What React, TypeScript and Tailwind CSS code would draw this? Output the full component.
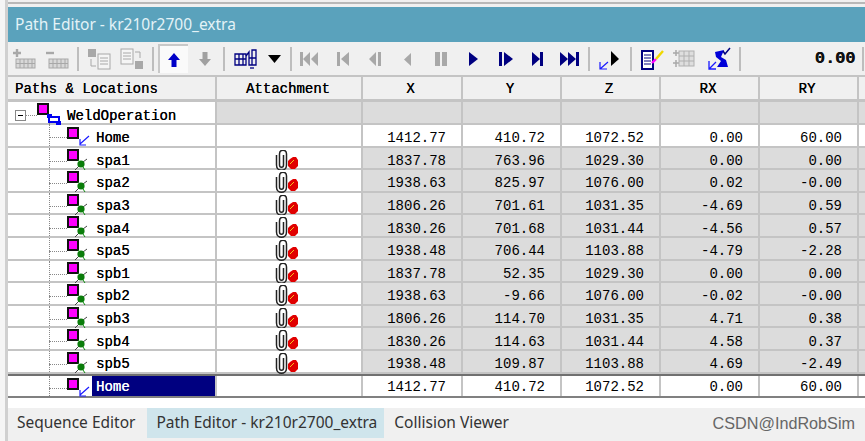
import React from "react";

const mono = "font-['Liberation_Mono',monospace]";
const grid = "grid grid-cols-[209px_146px_100px_99px_99px_99px_99px_6px]";

type Row = { name: string; x: string; y: string; z: string; rx: string; ry: string };

const rows: Row[] = [
  { name: "spa1", x: "1837.78", y: "763.96", z: "1029.30", rx: "0.00", ry: "0.00" },
  { name: "spa2", x: "1938.63", y: "825.97", z: "1076.00", rx: "0.02", ry: "-0.00" },
  { name: "spa3", x: "1806.26", y: "701.61", z: "1031.35", rx: "-4.69", ry: "0.59" },
  { name: "spa4", x: "1830.26", y: "701.68", z: "1031.44", rx: "-4.56", ry: "0.57" },
  { name: "spa5", x: "1938.48", y: "706.44", z: "1103.88", rx: "-4.79", ry: "-2.28" },
  { name: "spb1", x: "1837.78", y: "52.35", z: "1029.30", rx: "0.00", ry: "0.00" },
  { name: "spb2", x: "1938.63", y: "-9.66", z: "1076.00", rx: "-0.02", ry: "-0.00" },
  { name: "spb3", x: "1806.26", y: "114.70", z: "1031.35", rx: "4.71", ry: "0.38" },
  { name: "spb4", x: "1830.26", y: "114.63", z: "1031.44", rx: "4.58", ry: "0.37" },
  { name: "spb5", x: "1938.48", y: "109.87", z: "1103.88", rx: "4.69", ry: "-2.49" },
];

const headers = ["X", "Y", "Z", "RX", "RY"];

function Square() {
  return <div className="absolute w-[12px] h-[12px] bg-[#ff00ff] border-2 border-[#111]" />;
}

function Axis({ className }: { className: string }) {
  return (
    <svg className={className} width="12" height="12" viewBox="0 0 12 12" fill="none" stroke="#1a1aff" strokeWidth="1.2">
      <path d="M11 1 L2 9 M2 4 V10 H8" />
    </svg>
  );
}

function Target({ className }: { className: string }) {
  return (
    <svg className={className} width="14" height="14" viewBox="0 0 14 14">
      <path d="M1 13 L5 9 M9 5 L13 2" stroke="#444" strokeWidth="1" />
      <path d="M4 3 L6 5 M11 13 L9 10" stroke="#0a8a0a" strokeWidth="1" />
      <circle cx="7" cy="7" r="3.6" fill="#0a7d0a" />
    </svg>
  );
}

function Clip() {
  return (
    <svg className="absolute left-[58px] top-[2px]" width="30" height="22" viewBox="0 0 30 22">
      <path d="M1.5 5 V15 C1.5 22 11.5 22 11.5 15 V4 C11.5 -1 4.5 -1 4.5 4 V15 C4.5 18 8.5 18 8.5 15 V5" fill="none" stroke="#222" strokeWidth="1.5" />
      <path d="M15 9 L18 7 H21 L23 10 V16 L20 19 H16 L13 16 V11 Z" fill="#e00000" />
      <path d="M15 14 L19 10" stroke="#f5c020" strokeWidth="1" />
    </svg>
  );
}

function Cell({ value, gray, last }: { value: string; gray?: boolean; last?: boolean }) {
  return (
    <div className={`flex items-center justify-end pr-[15px] border-r-2 border-[#c4c4c4] text-[14px] leading-none text-black ${mono} ${gray ? "bg-[#dcdcdc]" : "bg-white"} ${last ? "pt-[2px]" : "pt-[6px] border-b-2"}`}>
      {value}
    </div>
  );
}

function Tree({ name, kind, selected, last }: { name: string; kind: "home" | "spot"; selected?: boolean; last?: boolean }) {
  return (
    <div className={`relative border-r-2 border-[#c4c4c4] bg-white ${last ? "" : "border-b-2"}`}>
      <div className="absolute left-[41px] top-0 h-full border-l border-dotted border-[#888]" />
      <div className={`absolute left-[41px] w-[18px] border-t border-dotted border-[#888] ${kind === "home" ? "top-[12px]" : "top-[13px]"}`} />
      <div className={`absolute left-[59px] ${kind === "home" ? "top-[2px]" : "top-[1px]"}`}>
        <Square />
      </div>
      {kind === "home" ? (
        <Axis className="absolute left-[70px] top-[10px]" />
      ) : (
        <Target className="absolute left-[66px] top-[9px]" />
      )}
      <div
        className={`absolute left-[84px] top-0 right-0 h-full flex items-center pl-[4px] text-[14px] leading-none [text-shadow:0.2px_0_0_currentColor] ${mono} ${selected ? "bg-[#000080] text-white pt-[2px]" : "text-black pt-[6px]"}`}
      >
        {name}
      </div>
    </div>
  );
}

function Sep({ ml }: { ml: string }) {
  return <div className={`w-[2px] h-[24px] bg-[#bdbdbd] ${ml}`} />;
}

function GridIcon({ sign }: { sign: "+" | "-" }) {
  return (
    <svg width="23" height="22" viewBox="0 0 23 22">
      <path d={sign === "+" ? "M4 1 V9 M0 5 H8" : "M0 5 H8"} stroke="#a8a8a8" strokeWidth="2.4" />
      <rect x="3" y="11" width="19" height="9" fill="#d8d8d8" stroke="#a8a8a8" />
      <path d="M3 15.5 H22 M7 11 V20 M11 11 V20 M15 11 V20 M19 11 V20" stroke="#a8a8a8" />
    </svg>
  );
}

function CopyIcon({ flip }: { flip?: boolean }) {
  return flip ? (
    <svg width="24" height="22" viewBox="0 0 24 22">
      <rect x="1" y="1" width="12" height="15" fill="#f5f5f5" stroke="#a8a8a8" />
      <path d="M3 5 H11 M3 8 H11 M3 11 H11" stroke="#a8a8a8" />
      <path d="M15 4 H20 V10" fill="none" stroke="#a8a8a8" />
      <rect x="15" y="13" width="8" height="8" fill="#a8a8a8" />
    </svg>
  ) : (
    <svg width="24" height="22" viewBox="0 0 24 22">
      <rect x="1" y="1" width="8" height="8" fill="#a8a8a8" />
      <path d="M4 11 V18 H9" fill="none" stroke="#a8a8a8" />
      <rect x="11" y="6" width="12" height="15" fill="#f5f5f5" stroke="#a8a8a8" />
      <path d="M13 10 H21 M13 13 H21 M13 16 H21" stroke="#a8a8a8" />
    </svg>
  );
}

const transport = [
  { d: "M0 1 H3 V15 H0 Z M10 1 V15 L3 8 Z M18 1 V15 L11 8 Z", on: false },
  { d: "M5 1 H8 V15 H5 Z M17 1 V15 L9 8 Z", on: false },
  { d: "M11 1 V15 L4 8 Z M13 1 H16 V15 H13 Z", on: false },
  { d: "M14 2 V15 L7 8.5 Z", on: false },
  { d: "M5 1 H10 V15 H5 Z M12 1 H17 V15 H12 Z", on: false },
  { d: "M7 1 L16 8 L7 15 Z", on: true },
  { d: "M4 1 H7 V15 H4 Z M9 1 L18 8 L9 15 Z", on: true },
  { d: "M5 1 L13 8 L5 15 Z M13 1 H16 V15 H13 Z", on: true },
  { d: "M0 1 L8 8 L0 15 Z M8 1 L16 8 L8 15 Z M16 1 H19 V15 H16 Z", on: true },
];

function Toolbar() {
  return (
    <div className="h-[35px] bg-[#f0f0f0] border-b-2 border-[#c4c4c4] flex items-center pl-[5px] shrink-0">
      <GridIcon sign="+" />
      <div className="ml-[10px]">
        <GridIcon sign="-" />
      </div>
      <Sep ml="ml-[8px]" />
      <div className="ml-[8px]">
        <CopyIcon />
      </div>
      <div className="ml-[9px]">
        <CopyIcon flip />
      </div>
      <Sep ml="ml-[8px]" />
      <div className="ml-[4px] w-[30px] h-[29px] bg-[#fafafa] border-l-2 border-t-2 border-[#c8c8c8] flex items-center justify-center">
        <svg width="14" height="16" viewBox="0 0 14 16">
          <path d="M7 1 L13 8 H9.5 V15 H4.5 V8 H1 Z" fill="#0000c8" />
        </svg>
      </div>
      <svg className="ml-[10px]" width="14" height="16" viewBox="0 0 14 16">
        <path d="M7 15 L13 8 H9.5 V1 H4.5 V8 H1 Z" fill="#a0a0a0" />
      </svg>
      <Sep ml="ml-[11px]" />
      <svg className="ml-[9px]" width="24" height="22" viewBox="0 0 24 22" fill="none" stroke="#000080" strokeWidth="1.3">
        <path d="M1 6 H12 V17 H1 Z M1 11 H12 M5 6 V17 M9 6 V17" />
        <path d="M12 8 L15 4 V17 H18 V2 H22 V17 H15 M15 10 H22" />
        <path d="M16 20 H20" />
      </svg>
      <svg className="ml-[10px]" width="13" height="8" viewBox="0 0 13 8">
        <path d="M0 0 H13 L6.5 8 Z" fill="#000" />
      </svg>
      <Sep ml="ml-[9px]" />
      <div className="flex ml-[1px]">
        {transport.map((t, i) => (
          <div key={i} className="w-[32.5px] flex justify-center">
            <svg width="19" height="16" viewBox="0 0 19 16">
              <path d={t.d} fill={t.on ? "#000080" : "#a8a8a8"} />
            </svg>
          </div>
        ))}
      </div>
      <Sep ml="ml-[2px]" />
      <div className="relative w-[40px] h-[24px]">
        <svg className="absolute left-[8px] top-[2px]" width="26" height="22" viewBox="0 0 26 22" fill="none">
          <path d="M2 20 L10 13 M2 13 V20 H9" stroke="#1a1aff" strokeWidth="1.2" />
          <path d="M13 2 L21 10 L13 17 Z" fill="#000" />
        </svg>
      </div>
      <Sep ml="ml-[0px]" />
      <svg className="ml-[9px]" width="24" height="22" viewBox="0 0 24 22" fill="none">
        <rect x="1" y="3" width="11" height="18" stroke="#000080" strokeWidth="2" fill="#fff" />
        <path d="M3 7 H10 M3 10 H10 M3 13 H10 M3 16 H10" stroke="#000080" />
        <path d="M11 15 L15 11" stroke="#ff00ff" strokeWidth="2.4" />
        <path d="M15 11 L22 3" stroke="#f0d800" strokeWidth="2.4" />
      </svg>
      <svg className="ml-[6px]" width="24" height="22" viewBox="0 0 24 22" fill="none">
        <path d="M2 5 H8 M2 15 H8 M5 2 V8 M5 12 V19" stroke="#a8a8a8" strokeWidth="1.5" />
        <rect x="8" y="3" width="15" height="15" fill="#dedede" stroke="#b0b0b0" />
        <path d="M8 8 H23 M8 13 H23 M13 3 V18 M18 3 V18" stroke="#b0b0b0" />
      </svg>
      <svg className="ml-[12px]" width="24" height="24" viewBox="0 0 24 24" fill="none">
        <path d="M2 14 V22 H9 M2 22 L9 15" stroke="#1a1aff" strokeWidth="1.3" />
        <path d="M8 5 L17 3 L14 10 L19 13 L21 20 H10 L14 14 L9 10 Z" fill="#0000d8" />
        <path d="M16 4 L18 7 L23 1" stroke="#000080" strokeWidth="1.5" />
      </svg>
      <Sep ml="ml-[8px]" />
      <div className={`w-[119px] text-right pr-[4px] text-[17px] font-bold text-[#111] [text-shadow:0.3px_0_0_currentColor] ${mono}`}>0.00</div>
      <Sep ml="ml-[2px]" />
    </div>
  );
}

function Header() {
  return (
    <div className={`${grid} h-[25px] bg-[#f0f0f0] border-b-[3px] border-[#c4c4c4] shrink-0 text-[14px] text-black [text-shadow:0.2px_0_0_currentColor] ${mono}`}>
      <div className="flex items-center pl-[7px] pt-[2px] border-r-2 border-[#c4c4c4]">Paths &amp; Locations</div>
      <div className="flex items-center justify-center pr-[2px] pt-[2px] border-r-2 border-[#c4c4c4]">Attachment</div>
      {headers.map((h) => (
        <div key={h} className="flex items-center justify-center pr-[3px] pt-[2px] border-r-2 border-[#c4c4c4]">{h}</div>
      ))}
      <div />
    </div>
  );
}

function DataRow({ name, kind, selected, gray, last, values }: { name: string; kind: "home" | "spot"; selected?: boolean; gray?: boolean; last?: boolean; values: string[] }) {
  return (
    <div className={`${grid} shrink-0 ${last ? "h-[20px]" : "h-[22.6px]"}`}>
      <Tree name={name} kind={kind} selected={selected} last={last} />
      <div className={`relative border-r-2 border-[#c4c4c4] bg-white ${last ? "" : "border-b-2"}`}>{kind === "spot" && <Clip />}</div>
      {values.map((v, i) => (
        <Cell key={i} value={v} gray={gray} last={last} />
      ))}
      <div className={`border-[#c4c4c4] ${gray ? "bg-[#dcdcdc]" : "bg-white"} ${last ? "" : "border-b-2"}`} />
    </div>
  );
}

export default function App() {
  return (
    <div className="w-[865px] h-[441px] overflow-hidden bg-[#f7f7f7] flex font-['Noto_Sans',sans-serif]">
      <div className="w-[8px] shrink-0 bg-[#f5f5f5] border-r-[3px] border-[#d0d0d0]" />
      <div className="flex-1 min-w-0 flex flex-col">
        <div className="h-[7px] pt-[2px] bg-[#f0f0f0] shrink-0">
          <div className="h-[2px] bg-[#b8b8b8]" />
        </div>
        <div className="h-[35px] bg-[#5aa2bc] text-[#e4f3f7] text-[15.5px] flex items-center pl-[7px] shrink-0">
          Path Editor - kr210r2700_extra
        </div>
        <Toolbar />
        <Header />
        <div className={`${grid} h-[23px] bg-[#dcdcdc] shrink-0`}>
          <div className="relative bg-white border-r-2 border-b-2 border-[#c4c4c4]">
            <div className="absolute left-[7px] top-[8px] w-[11px] h-[11px] bg-white border border-[#888] flex items-center justify-center">
              <div className="w-[5px] h-px bg-black" />
            </div>
            <div className="absolute left-[18px] top-[13px] w-[11px] border-t border-dotted border-[#888]" />
            <div className="absolute left-[29px] top-px">
              <Square />
            </div>
            <svg className="absolute left-[39px] top-[12px]" width="14" height="11" viewBox="0 0 14 11" fill="none">
              <rect x="2" y="3" width="10" height="5" stroke="#0000f0" strokeWidth="2" />
              <path d="M0 0 H5 V4 H0 Z M9 7 H14 V11 H9 Z" fill="#0000f0" />
            </svg>
            <div className={`absolute left-[59px] top-0 h-full flex items-center pt-[6px] text-[14px] leading-none text-black [text-shadow:0.2px_0_0_currentColor] ${mono}`}>WeldOperation</div>
            <div className="absolute left-[41px] top-[21px] h-[2px] border-l border-dotted border-[#888]" />
          </div>
          {Array.from({ length: 6 }).map((_, i) => (
            <div key={i} className="border-r-2 border-b-2 border-[#c4c4c4]" />
          ))}
          <div className="border-b-2 border-[#c4c4c4]" />
        </div>
        <DataRow name="Home" kind="home" values={["1412.77", "410.72", "1072.52", "0.00", "60.00"]} />
        {rows.map((r) => (
          <DataRow key={r.name} name={r.name} kind="spot" gray values={[r.x, r.y, r.z, r.rx, r.ry]} />
        ))}
        <div className="border-t-[2px] border-[#707070] shrink-0">
          <DataRow name="Home" kind="home" selected last values={["1412.77", "410.72", "1072.52", "0.00", "60.00"]} />
        </div>
        <div className="h-[2px] bg-[#808080] shrink-0" />
        <div className="flex-1 bg-white" />
        <div className="h-[33px] shrink-0 flex items-start text-[15.5px] text-[#333] bg-[#f0f0f0] pl-[1px] pr-[10px]">
          <div className="h-[30px] flex items-center pl-[8px] pr-[12px]">Sequence Editor</div>
          <div className="h-[30px] flex items-center pl-[9px] pr-[7px] bg-[#cfe5ec]">Path Editor - kr210r2700_extra</div>
          <div className="h-[30px] flex items-center px-[10px]">Collision Viewer</div>
          <div className="h-[30px] flex-1 flex items-center justify-end text-[16.2px] text-[#666] font-['Liberation_Sans',sans-serif]">CSDN@IndRobSim</div>
        </div>
      </div>
    </div>
  );
}
